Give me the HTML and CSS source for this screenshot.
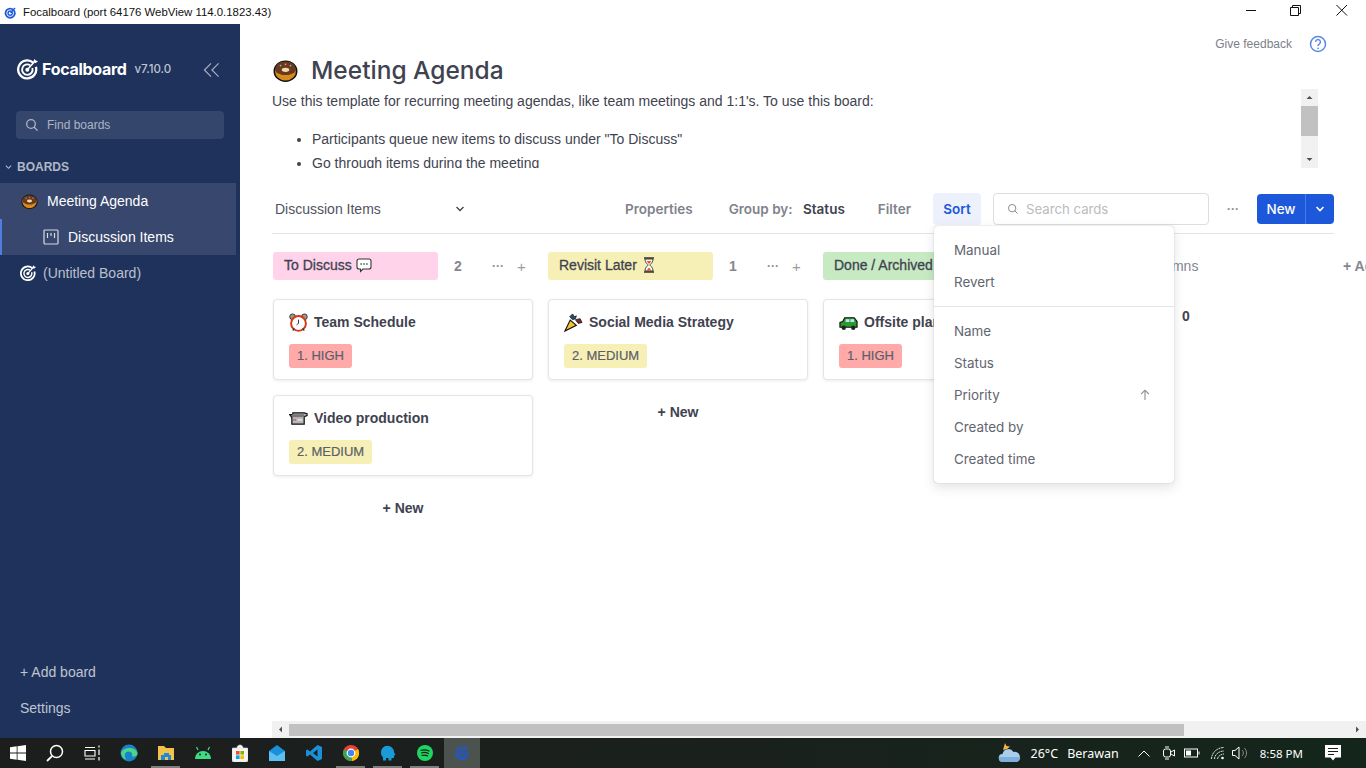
FILE: index.html
```html
<!DOCTYPE html>
<html lang="en">
<head>
    <meta charset="UTF-8">
    <meta name="viewport" content="width=device-width, initial-scale=1.0">
    <title>Focalboard</title>
    <link rel="stylesheet" href="styles.css">
</head>
<body>
    <svg class="defs" width="0" height="0">
        <symbol id="target" viewBox="0 0 20 20">
            <path d="M15.6 4.1A8.6 8.6 0 1 0 18 8" fill="none" stroke="currentColor" stroke-width="2.2"/>
            <path d="M12.6 6.4A5 5 0 1 0 14.6 9" fill="none" stroke="currentColor" stroke-width="1.8"/>
            <circle cx="9.8" cy="10.6" r="1.9" fill="currentColor"/>
            <path d="M10 10.4 17 2.6" stroke="currentColor" stroke-width="1.5"/>
            <path d="M15.6 3 16.4 .4 18 2 20 2.6 17.6 4.6Z" fill="currentColor"/>
        </symbol>
        <symbol id="donut" viewBox="0 0 20 20">
            <ellipse cx="10" cy="10.5" rx="9" ry="8" fill="#d98a1e" stroke="#111" stroke-width="1.2"/>
            <path d="M1.6 9.5C2 5 5.5 2.8 10 2.8s8 2.2 8.4 6.7c-1 3-3 2.6-4.4 3.4-2 1-6 1-8 0-1.400-.8-3.400-.4-4.400-3.400Z" fill="#6b3a1c"/>
            <ellipse cx="10" cy="9.400" rx="3" ry="1.700" fill="#f3d9b0"/>
            <circle cx="6" cy="6" r=".7" fill="#6fc3df"/><circle cx="14" cy="6" r=".7" fill="#6fc3df"/><circle cx="10" cy="5" r=".7" fill="#e88"/>
        </symbol>
    </svg>

    <div class="titlebar">
        <svg class="app-icon" viewBox="0 0 20 20"><circle cx="9.500" cy="11" r="8.500" fill="#1c58d9"/><circle cx="9.500" cy="11" r="5.200" fill="none" stroke="#fff" stroke-width="1.400"/><circle cx="9.500" cy="11" r="2" fill="#fff"/><path d="M10 10.500 17 3" stroke="#1c58d9" stroke-width="2"/></svg>
        <span class="titlebar-text">Focalboard (port 64176 WebView 114.0.1823.43)</span>
        <div class="win-controls">
            <svg width="46" height="20" viewBox="0 0 46 20"><path d="M18 10.500H28" stroke="#111"/></svg>
            <svg width="46" height="20" viewBox="0 0 46 20"><path d="M16.500 7.500H24.500V15.500H16.500ZM18.500 7.500V5.500H26.500V13.500H24.500" fill="none" stroke="#111"/></svg>
            <svg width="46" height="20" viewBox="0 0 46 20"><path d="M16.500 5 27 15.500M27 5 16.500 15.500" stroke="#111"/></svg>
        </div>
    </div>

    <div class="app">
        <aside class="sidebar">
            <div class="brand">
                <svg class="brand-logo"><use href="#target"/></svg>
                <span class="brand-name">Focalboard</span>
                <span class="brand-version">v7.10.0</span>
                <svg class="collapse" viewBox="0 0 18 16"><path d="M8.500 1 1.500 8l7 7M16.500 1l-7 7 7 7" fill="none" stroke="currentColor" stroke-width="1.300"/></svg>
            </div>
            <div class="find">
                <svg class="find-icon" viewBox="0 0 14 14"><circle cx="6" cy="6" r="4.300" fill="none" stroke="currentColor" stroke-width="1.300"/><path d="M9.200 9.200 12.600 12.600" stroke="currentColor" stroke-width="1.300"/></svg>
                Find boards
            </div>
            <div class="section-title">
                <svg class="section-chevron" viewBox="0 0 8 6"><path d="M1 1.500 4 4.500 7 1.500" fill="none" stroke="currentColor" stroke-width="1.300"/></svg>
                BOARDS
            </div>
            <div class="board-group">
                <div class="board-row">
                    <svg class="board-emoji"><use href="#donut"/></svg>
                    Meeting Agenda
                </div>
                <div class="view-row">
                    <svg class="view-icon" viewBox="0 0 16 16"><rect x="1" y="1" width="14" height="14" rx="1" fill="none" stroke="currentColor" stroke-width="1.200"/><path d="M4.500 4v5M8 4v3M11.500 4v5" stroke="currentColor" stroke-width="1.200"/></svg>
                    Discussion Items
                </div>
            </div>
            <div class="board-row board-row-plain">
                <svg class="board-target"><use href="#target"/></svg>
                (Untitled Board)
            </div>
            <div class="side-footer">
                <div class="side-link">+ Add board</div>
                <div class="side-link">Settings</div>
            </div>
        </aside>

        <main class="main">
            <div class="feedback">
                <span>Give feedback</span>
                <svg class="help" viewBox="0 0 18 18"><circle cx="9" cy="9" r="7.500" fill="none" stroke="currentColor" stroke-width="1.500"/><path d="M6.600 7a2.400 2.400 0 1 1 3.600 2.100c-.8.500-1.200 1-1.200 1.900" fill="none" stroke="currentColor" stroke-width="1.500"/><circle cx="9" cy="13.300" r=".9" fill="currentColor"/></svg>
            </div>
            <h1 class="board-title">
                <svg class="title-emoji"><use href="#donut"/></svg>
                Meeting Agenda
            </h1>
            <div class="description">
                <div class="description-text">
                    <p>Use this template for recurring meeting agendas, like team meetings and 1:1's. To use this board:</p>
                    <ul>
                        <li>Participants queue new items to discuss under "To Discuss"</li>
                        <li>Go through items during the meeting</li>
                    </ul>
                </div>
                <div class="vscroll">
                    <svg class="arrow" viewBox="0 0 17 17"><path d="M5.500 10 8.500 7l3 3Z" fill="#505050"/></svg>
                    <div class="vscroll-thumb"></div>
                    <svg class="arrow arrow-end" viewBox="0 0 17 17"><path d="M5.500 7 8.500 10l3-3Z" fill="#505050"/></svg>
                </div>
            </div>

            <div class="toolbar">
                <div class="view-title">
                    Discussion Items
                    <svg class="view-chevron" viewBox="0 0 10 6"><path d="M1.500 1 5 4.500 8.500 1" fill="none" stroke="currentColor" stroke-width="1.300"/></svg>
                </div>
                <div class="tool tool-props">Properties</div>
                <div class="tool">Group by: <b class="tool-value">Status</b></div>
                <div class="tool">Filter</div>
                <div class="sort-wrap">
                    <div class="tool tool-active">Sort</div>
                    <div class="menu">
                        <div class="menu-item">Manual</div>
                        <div class="menu-item">Revert</div>
                        <div class="menu-sep"></div>
                        <div class="menu-item">Name</div>
                        <div class="menu-item">Status</div>
                        <div class="menu-item">Priority
                            <svg class="menu-arrow" viewBox="0 0 12 12"><path d="M6 11V1.500M2.200 5 6 1.200 9.800 5" fill="none" stroke="currentColor" stroke-width="1.100"/></svg>
                        </div>
                        <div class="menu-item">Created by</div>
                        <div class="menu-item">Created time</div>
                    </div>
                </div>
                <div class="search">
                    <svg class="search-icon" viewBox="0 0 14 14"><circle cx="6" cy="6" r="4.300" fill="none" stroke="currentColor" stroke-width="1.100"/><path d="M9.200 9.200 12.400 12.400" stroke="currentColor" stroke-width="1.100"/></svg>
                    Search cards
                </div>
                <div class="dots dots-toolbar">···</div>
                <div class="new-btn">
                    <span class="new-label">New</span>
                    <span class="new-drop"><svg viewBox="0 0 10 6"><path d="M1.500 1 5 4.500 8.500 1" fill="none" stroke="#fff" stroke-width="1.600"/></svg></span>
                </div>
            </div>

            <div class="board">
                <section class="column">
                    <div class="column-head">
                        <div class="column-name pink">To Discuss
                            <svg class="inline-emoji" viewBox="0 0 16 16"><path d="M3 2h10a2 2 0 0 1 2 2v6a2 2 0 0 1-2 2H7l-2.500 2.500V12H3a2 2 0 0 1-2-2V4a2 2 0 0 1 2-2Z" fill="#fff" stroke="#333" stroke-width="1.100"/><path d="M4.500 7h1.300M7.400 7h1.300M10.300 7h1.300" stroke="#333" stroke-width="1.300"/></svg>
                        </div>
                        <span class="column-count">2</span>
                        <span class="dots">···</span>
                        <span class="plus">+</span>
                    </div>
                    <article class="card">
                        <div class="card-title">
                            <svg class="card-emoji" viewBox="0 0 20 20"><circle cx="3.800" cy="4" r="3" fill="#999" stroke="#333"/><circle cx="16.200" cy="4" r="3" fill="#999" stroke="#333"/><circle cx="10" cy="11" r="7.800" fill="#fff" stroke="#d9330f" stroke-width="2"/><path d="M10 7v4l-2 1.500" stroke="#333" fill="none"/><path d="M4 18.500 5.500 16M16 18.500 14.500 16" stroke="#333" stroke-width="1.300"/></svg>
                            Team Schedule
                        </div>
                        <span class="tag high">1. HIGH</span>
                    </article>
                    <article class="card">
                        <div class="card-title">
                            <svg class="card-emoji" viewBox="0 0 20 20"><path d="M1 6h3V4h12l3 1v2l-3 1v8H3V9Z" fill="#b8b8b8" stroke="#111" stroke-width="1.300"/><rect x="3" y="5.500" width="13" height="3" fill="#777"/><path d="M4.500 11.500h3" stroke="#d33" stroke-width="1"/><path d="M9 11.500h5" stroke="#fff"/></svg>
                            Video production
                        </div>
                        <span class="tag medium">2. MEDIUM</span>
                    </article>
                    <div class="add-card">+ New</div>
                </section>

                <section class="column">
                    <div class="column-head">
                        <div class="column-name yellow">Revisit Later
                            <svg class="inline-emoji" viewBox="0 0 16 16"><path d="M3 1h10M3 15h10" stroke="#333" stroke-width="1.500"/><path d="M4 2c0 4 3 5 3 6s-3 2-3 6h8c0-4-3-5-3-6s3-2 3-6Z" fill="#fff" stroke="#333"/><path d="M5.500 13.500h5L8 10.500ZM5.500 4h5L8 7Z" fill="#e05a1c"/></svg>
                        </div>
                        <span class="column-count">1</span>
                        <span class="dots">···</span>
                        <span class="plus">+</span>
                    </div>
                    <article class="card">
                        <div class="card-title">
                            <svg class="card-emoji" viewBox="0 0 20 20"><path d="M1 19 6.500 7.500 13 13Z" fill="#f4c430" stroke="#111" stroke-width="1.200"/><path d="M6 4l3-3 2 3 2-1-1 3-3 1Z" fill="#28506e" stroke="#111" stroke-width=".8"/><path d="M12 7l5-1 2 4-4 1Z" fill="#7c2a2a" stroke="#111" stroke-width=".8"/></svg>
                            Social Media Strategy
                        </div>
                        <span class="tag medium">2. MEDIUM</span>
                    </article>
                    <div class="add-card">+ New</div>
                </section>

                <section class="column">
                    <div class="column-head">
                        <div class="column-name green">Done / Archived</div>
                    </div>
                    <article class="card">
                        <div class="card-title">
                            <svg class="card-emoji" viewBox="0 0 20 20"><path d="M1 15v-5l3-1 2-4h10l3 4v6Z" fill="#2c9a2c" stroke="#111" stroke-width="1.200"/><rect x="7" y="6.500" width="4" height="3" fill="#bfe3ef"/><rect x="12" y="6.500" width="4" height="3" fill="#bfe3ef"/><circle cx="5" cy="15.500" r="2.300" fill="#222"/><circle cx="15" cy="15.500" r="2.300" fill="#222"/></svg>
                            Offsite plan
                        </div>
                        <span class="tag high">1. HIGH</span>
                    </article>
                </section>

                <section class="column column-hidden">
                    <div class="column-head hidden-title">Hidden columns</div>
                    <div class="hidden-count">0</div>
                </section>
                <div class="add-group">+ Add a group</div>
            </div>

            <div class="hscroll">
                <svg class="arrow" viewBox="0 0 17 16"><path d="M10 5 7 8l3 3Z" fill="#505050"/></svg>
                <div class="hscroll-thumb"></div>
                <svg class="arrow" viewBox="0 0 17 16"><path d="M7 5 10 8l-3 3Z" fill="#505050"/></svg>
            </div>
        </main>
    </div>

    <footer class="taskbar">
        <div class="tb-start">
            <svg width="16" height="16" viewBox="0 0 16 16"><path d="M0 2.300 6.700 1.300V7.600H0ZM7.500 1.200 16 0V7.600H7.500ZM0 8.400H6.700V14.700L0 13.700ZM7.500 8.400H16V16L7.500 14.800Z" fill="#fff"/></svg>
        </div>
        <div class="tb-btn"><svg width="18" height="18" viewBox="0 0 18 18"><circle cx="10.500" cy="7.500" r="6" fill="none" stroke="#fff" stroke-width="1.500"/><path d="M6.200 11.800 1 17" stroke="#fff" stroke-width="1.800"/></svg></div>
        <div class="tb-btn"><svg width="16" height="16" viewBox="0 0 16 16"><path d="M1 2.500H11M1 5.500H11V11H1ZM1 14H11" fill="none" stroke="#fff" stroke-width="1.100"/><path d="M15 .5V2.500M15 4.500V10M15 12V15.500" stroke="#fff" stroke-width="1.200"/></svg></div>
        <div class="tb-btn"><svg width="18" height="18" viewBox="0 0 18 18"><circle cx="9" cy="9" r="8.500" fill="#1783c9"/><path d="M1 9c2-6 14-7 16.500 0 .3 3-3 4-6 3.500 2-2 0-5-3-5-4 0-5 5-2 8-3 0-5-3-5.500-6.500Z" fill="#4fd38a"/></svg></div>
        <div class="tb-btn tb-open"><svg width="18" height="16" viewBox="0 0 18 16"><path d="M1 1h6l2 2h8v12H1Z" fill="#f2c24a"/><path d="M7 8h5v2h2v5h-3v-3H8v3H4v-5h3Z" fill="#1e88d9"/></svg></div>
        <div class="tb-btn"><svg width="18" height="14" viewBox="0 0 18 14"><path d="M1 13a8 8 0 0 1 16 0Z" fill="#3ddc84"/><path d="M4 4 2.500 1M14 4l1.500-3" stroke="#3ddc84" stroke-width="1.200"/><circle cx="6" cy="8.500" r="1" fill="#1b201d"/><circle cx="12" cy="8.500" r="1" fill="#1b201d"/></svg></div>
        <div class="tb-btn"><svg width="16" height="18" viewBox="0 0 16 18"><path d="M1 4h14a1 1 0 0 1 1 1v11a2 2 0 0 1-2 2H2a2 2 0 0 1-2-2V5a1 1 0 0 1 1-1ZM5 4c0-4 6-4 6 0" fill="#f4f4f4" stroke="#ddd" stroke-width=".6"/><rect x="4" y="7" width="3.600" height="3.600" fill="#f25022"/><rect x="8.400" y="7" width="3.600" height="3.600" fill="#7fba00"/><rect x="4" y="11.400" width="3.600" height="3.600" fill="#00a4ef"/><rect x="8.400" y="11.400" width="3.600" height="3.600" fill="#ffb900"/></svg></div>
        <div class="tb-btn"><svg width="16" height="16" viewBox="0 0 16 16"><path d="M0 6 8 0l8 6v10H0Z" fill="#1b8fd8"/><path d="M0 6l8 5 8-5v10H0Z" fill="#5cc1f2"/></svg></div>
        <div class="tb-btn"><svg width="16" height="16" viewBox="0 0 16 16"><path d="M11.500 0 16 2v12l-4.500 2L4 9.500 1.500 11.500 0 10.700V5.300L1.500 4.500 4 6.500ZM11.500 4.500 7 8l4.500 3.500Z" fill="#1b8fd8"/></svg></div>
        <div class="tb-btn tb-open"><svg width="16" height="16" viewBox="0 0 16 16"><circle cx="8" cy="8" r="8" fill="#ea4335"/><path d="M8 8 15 4a8 8 0 0 1-6 12Z" fill="#fbbc05"/><path d="M8 8 1 4.500A8 8 0 0 0 9 16Z" fill="#34a853"/><circle cx="8" cy="8" r="3.800" fill="#4285f4" stroke="#fff" stroke-width="1.200"/></svg></div>
        <div class="tb-btn tb-open"><svg width="16" height="16" viewBox="0 0 16 16"><path d="M1 7.500a6.500 6.500 0 0 1 13-.5l1.500 3-1.500.5V13h-2.500v2.500h-3V13H6v2.500H3V12.500C1.800 11 1 9.500 1 7.500Z" fill="#1b9ad8"/></svg></div>
        <div class="tb-btn tb-open"><svg width="16" height="16" viewBox="0 0 16 16"><circle cx="8" cy="8" r="8" fill="#1ed760"/><path d="M3.500 5.500c3-1 6-.8 9 .8M4 8c2.500-.8 5.500-.6 7.800.7M4.500 10.500c2-.6 4.500-.5 6.500.6" fill="none" stroke="#18201b" stroke-width="1.200"/></svg></div>
        <div class="tb-btn tb-active"><svg width="14" height="14" viewBox="0 0 20 20" class="tb-target"><use href="#target"/></svg></div>

        <div class="tray">
            <svg class="weather" width="26" height="24" viewBox="0 0 26 24"><path d="M9 2 10.500 5 14 5.500 11 8 7 9Z" fill="#f5b53c"/><path d="M7 21a4 4 0 0 1-.5-8 6 6 0 0 1 11-2 5 5 0 0 1 2.500 10Z" fill="#a9cdea"/><path d="M3 16h21a4 4 0 0 1-4 5H7a4 4 0 0 1-4-5Z" fill="#7fb0dc"/></svg>
            <span class="tray-temp">26°C</span>
            <span class="tray-weather">Berawan</span>
            <svg class="tray-caret" width="12" height="7" viewBox="0 0 12 7"><path d="M.5 6.500 6 1l5.500 5.500" fill="none" stroke="#fff"/></svg>
            <svg class="tray-cam" width="12" height="14" viewBox="0 0 12 14"><rect x=".5" y="3" width="7" height="8" rx="2" fill="none" stroke="#fff"/><path d="M8 6l3.500-2v6L8 8" fill="none" stroke="#fff"/><path d="M2 1h4M2 13h4" stroke="#fff"/></svg>
            <svg class="tray-bat" width="16" height="10" viewBox="0 0 16 10"><rect x=".5" y="1" width="13" height="8" fill="none" stroke="#fff"/><rect x="2" y="2.500" width="5" height="5" fill="#fff"/><path d="M15 3.500V6.500" stroke="#fff"/></svg>
            <svg class="tray-wifi" width="14" height="13" viewBox="0 0 14 13"><path d="M.5 12C.5 6 6 .5 13 .5M3.500 12C3.500 8 7.500 4 13 4M6.500 12c0-2 3-5 6.500-5" fill="none" stroke="#ddd" stroke-dasharray="2 .6"/><circle cx="11.500" cy="11" r="1.300" fill="#fff"/></svg>
            <svg class="tray-vol" width="16" height="14" viewBox="0 0 16 14"><path d="M.5 4.500H3L7 1V13L3 9.500H.5Z" fill="none" stroke="#fff"/><path d="M10 4a4 4 0 0 1 0 6M12.500 2a7 7 0 0 1 0 10" fill="none" stroke="#888"/></svg>
            <span class="tray-time">8:58 PM</span>
            <svg class="tray-note" width="16" height="16" viewBox="0 0 16 16"><path d="M0 0H16V12.500H10.500L8 15.500 5.500 12.500H0Z" fill="#fff"/><path d="M3 3.500H13M3 6.500H13M3 9.500H9" stroke="#1b201d"/></svg>
        </div>
    </footer>
</body>
</html>
```

FILE: styles.css
```css
* {
    box-sizing: border-box;
}
html, body {
    margin: 0;
    height: 100%;
    overflow: hidden;
}
body {
    display: flex;
    flex-direction: column;
    height: 768px;
    font-family: "Liberation Sans", Arial, sans-serif;
    font-size: 14px;
    color: #3f4350;
    background-color: #fff;
}
.defs {
    position: absolute;
}

/* window title */
.titlebar {
    display: flex;
    align-items: center;
    flex: 0 0 24px;
    padding-left: 4px;
    background-color: #fff;
}
.app-icon {
    width: 13px;
    height: 13px;
}
.titlebar-text {
    margin-left: 6px;
    font-size: 11.4px;
    color: #111;
}
.win-controls {
    display: flex;
    align-self: flex-start;
    margin-left: auto;
}
.win-controls svg {
    display: block;
}

/* sidebar */
.app {
    display: flex;
    flex: 1;
    min-height: 0;
}
.sidebar {
    display: flex;
    flex-direction: column;
    flex: 0 0 240px;
    background-color: #1e325c;
    color: #fff;
}
.brand {
    display: flex;
    align-items: center;
    height: 24px;
    margin-top: 33px;
    padding-left: 17px;
}
.brand-logo {
    width: 21px;
    height: 22px;
    color: #fff;
}
.brand-name {
    margin-left: 4px;
    font-family: Inter, sans-serif;
    font-size: 16px;
    font-weight: 700;
    letter-spacing: -.3px;
}
.brand-version {
    margin-left: 8px;
    font-family: Inter, sans-serif;
    font-size: 11.5px;
    font-weight: 500;
    color: rgba(255, 255, 255, .72);
}
.collapse {
    width: 17px;
    height: 16px;
    margin-top: 2px;
    margin-left: 32px;
    color: rgba(255, 255, 255, .6);
}
.find {
    display: flex;
    align-items: center;
    height: 28px;
    margin: 30px 16px 0;
    padding-left: 9px;
    border-radius: 4px;
    background-color: #34466c;
    font-size: 12px;
    color: rgba(255, 255, 255, .6);
}
.find-icon {
    width: 14px;
    height: 14px;
    margin-right: 8px;
}
.section-title {
    display: flex;
    align-items: center;
    height: 20px;
    margin-top: 18px;
    padding-left: 5px;
    font-size: 12px;
    font-weight: 700;
    color: rgba(255, 255, 255, .66);
}
.section-chevron {
    width: 7px;
    height: 6px;
    margin-right: 5px;
}
.board-group {
    width: 236px;
    margin-top: 6px;
    background-color: #37476d;
}
.board-row {
    display: flex;
    align-items: center;
    height: 36px;
    padding-left: 21px;
    color: #fff;
}
.board-row-plain {
    color: rgba(255, 255, 255, .7);
    padding-left: 20px;
}
.board-emoji {
    width: 17px;
    height: 17px;
    margin-right: 9px;
}
.board-target {
    width: 16px;
    height: 16px;
    margin-right: 7px;
    color: #fff;
}
.view-row {
    display: flex;
    align-items: center;
    height: 36px;
    padding-left: 41px;
    border-left: 2px solid #4f7de0;
}
.view-icon {
    width: 16px;
    height: 16px;
    margin-right: 9px;
    color: rgba(255, 255, 255, .8);
}
.side-footer {
    margin-top: auto;
    padding-bottom: 12px;
}
.side-link {
    height: 36px;
    padding-left: 20px;
    line-height: 36px;
    color: rgba(255, 255, 255, .72);
}

/* main area */
.main {
    display: flex;
    flex-direction: column;
    flex: 1;
    min-width: 0;
    padding: 0 32px;
}
.feedback {
    display: flex;
    align-items: center;
    justify-content: flex-end;
    height: 18px;
    margin-top: 11px;
    padding-right: 7px;
    font-size: 12px;
    color: #7c7f88;
}
.help {
    width: 18px;
    height: 18px;
    margin-left: 17px;
    color: #5a8ae6;
}
.board-title {
    display: flex;
    align-items: center;
    height: 36px;
    margin: 0;
    padding-bottom: 2px;
    font-family: Inter, sans-serif;
    font-size: 24.5px;
    font-weight: 500;
    color: #3f4350;
}
.title-emoji {
    width: 27px;
    height: 25px;
    margin-right: 12px;
}
.description {
    display: flex;
    height: 79px;
    overflow: hidden;
    width: 1046px;
    line-height: 24px;
}
.description-text {
    flex: 1;
}
.description p {
    margin: 0;
}
.description ul {
    margin: 14px 0 0;
    padding-left: 40px;
}
.vscroll {
    display: flex;
    flex-direction: column;
    flex: 0 0 17px;
    background-color: #f1f1f1;
}
.arrow {
    display: block;
    width: 17px;
    height: 17px;
    flex: none;
}
.arrow-end {
    margin-top: auto;
}
.vscroll-thumb {
    height: 30px;
    background-color: #c1c1c1;
}

/* toolbar */
.toolbar {
    display: flex;
    align-items: center;
    height: 41px;
    margin-top: 25px;
    padding-bottom: 8px;
    border-bottom: 1px solid #e5e5e7;
}
.view-title {
    display: flex;
    align-items: center;
    width: 193px;
    padding-left: 3px;
    color: #50535e;
}
.view-chevron {
    width: 10px;
    height: 6px;
    margin-left: auto;
    color: #3f4350;
}
.tool {
    display: flex;
    align-items: center;
    height: 32px;
    margin-right: 11px;
    padding: 0 11px;
    border-radius: 4px;
    font-family: Inter, sans-serif;
    font-weight: 600;
    font-size: 13.5px;
    color: #7f828b;
    white-space: pre;
}
.tool-props {
    margin-left: auto;
    margin-right: 14px;
}
.tool-value {
    margin-left: 7px;
    font-weight: 600;
    color: #3f4350;
}
.sort-wrap {
    position: relative;
    margin-right: 1px;
}
.tool-active {
    justify-content: center;
    width: 48px;
    padding: 0;
    background-color: #edf1fb;
    color: #1c58d9;
}
.menu {
    position: absolute;
    top: 33px;
    left: 1px;
    z-index: 5;
    width: 240px;
    padding: 8px 0;
    border-radius: 4px;
    background-color: #fff;
    box-shadow: 0 0 1px rgba(63, 67, 80, .5), 0 4px 12px rgba(63, 67, 80, .16);
}
.menu-item {
    display: flex;
    align-items: center;
    justify-content: space-between;
    height: 32px;
    padding: 0 23px 1px 20px;
    font-family: Inter, sans-serif;
    font-size: 13.4px;
    color: #62656f;
}
.menu-sep {
    height: 1px;
    margin: 8px 0;
    background-color: #e3e4e6;
}
.menu-arrow {
    width: 12px;
    height: 12px;
    color: #8c8f97;
}
.search {
    display: flex;
    align-items: center;
    width: 216px;
    height: 32px;
    padding-left: 13px;
    border: 1px solid #dcdde0;
    border-radius: 4px;
    font-family: Inter, sans-serif;
    font-size: 13.2px;
    color: #b9bbc1;
}
.search-icon {
    width: 12px;
    height: 12px;
    margin-right: 7px;
    color: #83858d;
}
.dots {
    font-size: 12px;
    font-weight: 700;
    color: #8c8f97;
}
.dots-toolbar {
    width: 48px;
    text-align: center;
}
.new-btn {
    display: flex;
    align-items: center;
    height: 30px;
    width: 77px;
    border-radius: 4px;
    background-color: #1c58d9;
    color: #fff;
    font-family: Inter, sans-serif;
    font-size: 13.5px;
    font-weight: 500;
}
.new-label {
    width: 48px;
    text-align: center;
}
.new-drop {
    display: flex;
    align-items: center;
    justify-content: center;
    flex: 1;
    height: 100%;
    border-left: 1px solid #4a7be3;
}
.new-drop svg {
    width: 10px;
    height: 6px;
}

/* board */
.board {
    display: flex;
    flex: 1;
    gap: 15px;
    margin-right: -32px;
    padding: 18px 0 0 1px;
    overflow: hidden;
}
.column {
    flex: 0 0 260px;
}
.column-head {
    display: flex;
    align-items: center;
    height: 28px;
    margin-bottom: 19px;
}
.column-name {
    display: flex;
    align-items: center;
    width: 165px;
    height: 28px;
    padding: 0 0 2px 11px;
    border-radius: 3px;
    -webkit-text-stroke: .3px #3f4350;
    white-space: nowrap;
}
.pink {
    background-color: #ffd3e9;
}
.yellow {
    background-color: #f7f0b6;
}
.green {
    background-color: #c7eac3;
    width: 260px;
}
.inline-emoji {
    width: 16px;
    height: 16px;
    margin-left: 4px;
}
.column-count {
    width: 40px;
    text-align: center;
    font-weight: 700;
    color: #85878f;
}
.column-head .dots {
    margin-left: 14px;
}
.plus {
    margin-left: 13px;
    font-size: 15px;
    color: #9a9ca3;
}
.card {
    height: 81px;
    margin-bottom: 15px;
    padding: 10px 15px;
    border: 1px solid #e4e5e7;
    border-radius: 4px;
    background-color: #fff;
    box-shadow: 0 1px 3px rgba(63, 67, 80, .1);
}
.card-title {
    display: flex;
    align-items: center;
    height: 24px;
    font-weight: 700;
    color: #3f4350;
    white-space: nowrap;
}
.card-emoji {
    width: 19px;
    height: 19px;
    margin-right: 6px;
}
.tag {
    display: inline-block;
    height: 24px;
    margin-top: 10px;
    padding: 0 8px;
    border-radius: 3px;
    font-size: 13px;
    line-height: 24px;
    -webkit-text-stroke: .2px #5c5f69;
    color: #5c5f69;
}
.high {
    background-color: #ffa9a9;
}
.medium {
    background-color: #f7f0b6;
}
.add-card {
    margin-top: 24px;
    text-align: center;
    font-weight: 700;
}
.column-hidden {
    flex: 0 0 230px;
}
.hidden-title {
    color: #85878f;
    margin-bottom: 0;
    white-space: nowrap;
}
.hidden-count {
    margin-top: 28px;
    padding-left: 84px;
    font-weight: 700;
}
.add-group {
    flex: none;
    height: 28px;
    line-height: 28px;
    font-weight: 700;
    color: #85878f;
    white-space: nowrap;
}
.hscroll {
    display: flex;
    align-items: center;
    flex: 0 0 16px;
    margin-right: -32px;
    background-color: #f1f1f1;
}
.hscroll-thumb {
    width: 895px;
    height: 12px;
    background-color: #c1c1c1;
}
.hscroll .arrow:last-child {
    margin-left: auto;
}

/* taskbar */
.taskbar {
    display: flex;
    align-items: center;
    flex: 0 0 30px;
    background: linear-gradient(90deg, #1c1e1e, #1a201c 50%, #14261c);
    color: #fff;
}
.tb-start {
    display: flex;
    align-items: center;
    justify-content: center;
    width: 36px;
    height: 30px;
}
.tb-btn {
    display: flex;
    align-items: center;
    justify-content: center;
    width: 37px;
    height: 30px;
}
.tb-open {
    border-bottom: 2px solid #7c7f7d;
    padding-top: 2px;
    margin: 0 4px;
    width: 29px;
}
.tb-active {
    width: 36px;
    margin-left: 1px;
    background-color: #4c534e;
    color: #1c58d9;
}
.tray {
    display: flex;
    align-items: center;
    margin-left: auto;
    padding-right: 25px;
    font-family: "Noto Sans", sans-serif;
    font-size: 12.5px;
}
.tray-temp {
    margin-left: 9px;
}
.tray-weather {
    margin-left: 9px;
}
.tray-caret {
    margin-left: 19px;
}
.tray-cam {
    margin-left: 13px;
}
.tray-bat {
    margin-left: 9px;
}
.tray-wifi {
    margin-left: 11px;
}
.tray-vol {
    margin-left: 7px;
}
.tray-time {
    margin-left: 12px;
    font-size: 11.5px;
}
.tray-note {
    margin-left: 22px;
}
```
